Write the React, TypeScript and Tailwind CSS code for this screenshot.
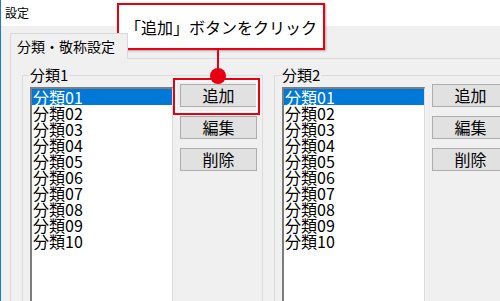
import React from "react";

const rows = ["分類01", "分類02", "分類03", "分類04", "分類05", "分類06", "分類07", "分類08", "分類09", "分類10"];

function ListBox() {
  return (
    <div className="w-[143px] h-[240px] mt-[4px] shrink-0 bg-white border-t-2 border-l-2 border-r border-[#7d7d7d] border-r-[#dcdcdc]">
      {rows.map((r, i) => (
        <div
          key={r}
          className={
            i === 0
              ? "h-[16px] leading-[16px] text-[16px] pl-[1px] bg-[#0078d7] text-white whitespace-nowrap"
              : "h-[16px] leading-[16px] text-[16px] pl-[1px] text-black whitespace-nowrap"
          }
        >
          {r}
        </div>
      ))}
    </div>
  );
}

function Btn({ label }: { label: string }) {
  return (
    <div className="w-[77px] h-[23px] bg-[#e1e1e1] border border-[#adadad] text-[16px] leading-[21px] text-center text-black">
      {label}
    </div>
  );
}

function Group({ title, highlight }: { title: string; highlight?: boolean }) {
  return (
    <fieldset className="w-[241px] shrink-0 border border-[#dcdcdc] pl-[7px] h-[260px]">
      <legend className="-ml-[1px] px-[1px] text-[15px] leading-[16px] text-black">{title}</legend>
      <div className="flex gap-[7px]">
        <ListBox />
        <div className="flex flex-col gap-[9px] mt-[1px]">
          <div className="relative">
            <Btn label="追加" />
            {highlight && (
              <div className="absolute -left-[7px] -right-[3px] -top-[6px] -bottom-[8px] border-2 border-[#e60012] shadow-[inset_0_0_0_2px_#ffffff]" />
            )}
          </div>
          <Btn label="編集" />
          <Btn label="削除" />
        </div>
      </div>
    </fieldset>
  );
}

export default function App() {
  return (
    <div className="w-[500px] h-[301px] relative overflow-hidden bg-[#f0f0f0] border-l border-[#1c7ad2] font-['Noto_Sans_CJK_JP',sans-serif] text-black">
      <div className="h-[26px] bg-white text-[12px] leading-[26px] pl-[4px]">設定</div>
      <div className="pl-[9px] pt-[7px]">
        <div className="flex">
          <div className="relative z-10 -mb-px h-[26px] w-[118px] bg-[#f0f0f0] border border-b-0 border-[#d9d9d9] text-[14px] leading-[24px] pl-[6px] whitespace-nowrap">
            分類・敬称設定
          </div>
        </div>
        <div className="border-l border-t border-[#d9d9d9] h-[300px] pl-[11px] pt-[8px] flex gap-[11px]">
          <Group title="分類1" highlight />
          <Group title="分類2" />
        </div>
      </div>

      {/* callout */}
      <div className="absolute left-[116px] top-[3px] w-[208px] h-[47px] bg-white border-2 border-[#e60012] shadow-[1px_1px_2px_rgba(0,0,0,0.3)] flex items-center justify-center text-[16px] text-black whitespace-nowrap">
        「追加」ボタンをクリック
      </div>
      <div className="absolute left-[216px] top-[50px] w-[2px] h-[20px] bg-[#e60012]" />
      <div className="absolute left-[209px] top-[68px] w-[16px] h-[16px] rounded-full bg-[#e60012]" />
    </div>
  );
}
